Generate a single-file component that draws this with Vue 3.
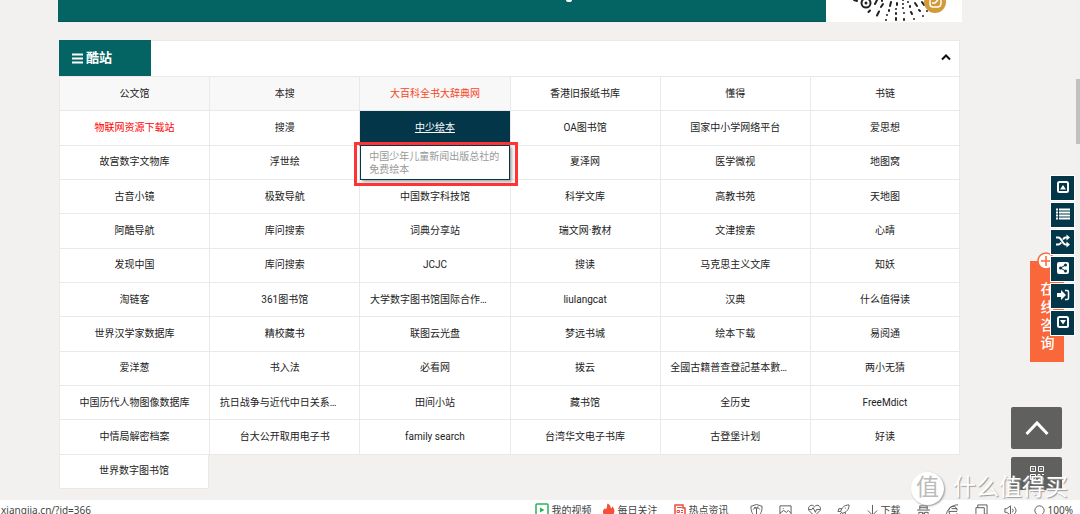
<script setup>
import { ref } from 'vue'

const open = ref(true)

const sites = [
  '公文馆', '本搜', '大百科全书大辞典网', '香港旧报纸书库', '懂得', '书链',
  '物联网资源下载站', '搜漫', '中少绘本', 'OA图书馆', '国家中小学网络平台', '爱思想',
  '故宫数字文物库', '浮世绘', '', '夏泽网', '医学微视', '地图窝',
  '古音小镜', '极致导航', '中国数字科技馆', '科学文库', '高教书苑', '天地图',
  '阿酷导航', '库问搜索', '词典分享站', '瑞文网·教材', '文津搜索', '心晴',
  '发现中国', '库问搜索', 'JCJC', '搜读', '马克思主义文库', '知妖',
  '淘链客', '361图书馆', '大学数字图书馆国际合作…', 'liulangcat', '汉典', '什么值得读',
  '世界汉学家数据库', '精校藏书', '联图云光盘', '梦远书城', '绘本下载', '易阅通',
  '爱洋葱', '书入法', '必看网', '拨云', '全國古籍普查登記基本數…', '两小无猜',
  '中国历代人物图像数据库', '抗日战争与近代中日关系…', '田间小站', '藏书馆', '全历史', 'FreeMdict',
  '中情局解密档案', '台大公开取用电子书', 'family search', '台湾华文电子书库', '古登堡计划', '好读',
  '世界数字图书馆',
]

function cellClass(i) {
  return {
    tinted: i < 3,
    orange: i === 2,
    red: i === 6,
    active: i === 8,
    long: sites[i].endsWith('…'),
  }
}
</script>

<template>
  <div class="page">
    <main class="content">
      <section class="banner">
        <div class="banner-main"><i class="banner-mark"></i></div>
        <div class="banner-code">
          <svg width="136" height="22" viewBox="0 0 136 22" aria-hidden="true">
            <g stroke="#222" stroke-width="2" stroke-linecap="round" fill="none">
              <circle cx="40" cy="3" r="4.500" />
              <path d="M28 0l3 1M42.500 12l1.500-1.500M51 15.500l2-4M55 7l2-3M49 4l2-4M60 20v0M61 15v0M63 11v-1M64 6l1-4M56 1v-1M70 20v-2M70 14v-1M70 9v0M71 5v-2M78 20v-1M78 13v0M77 8v0M77 4v0M77 0v0M88 19v0M86 14l-1-2M84 7v-1M82 2v0M97 16v0M94 11l-1-1M91 6l-2-3M98 5l-2-3M101 11v0" />
            </g>
            <circle cx="40" cy="3" r="1.500" fill="#222" />
            <circle cx="109" cy="2" r="11" fill="#d29a38" />
            <path d="M104 0v4q0 3 3 3h4q4 0 4-4V0M106 3h3l3-3" fill="none" stroke="#fff" stroke-width="1.500" />
          </svg>
        </div>
      </section>

      <section class="panel">
        <header class="panel-head">
          <h2 class="tab">
            <svg width="11" height="11" viewBox="0 0 11 11" aria-hidden="true"><path d="M0 1.500h11M0 5.500h11M0 9.500h11" stroke="#fff" stroke-width="2" /></svg>
            酷站
          </h2>
          <button class="fold" type="button" aria-label="收起" @click="open = !open">
            <svg width="10" height="7" viewBox="0 0 10 7"><path d="M1 5.500l4-4 4 4" fill="none" stroke="#111" stroke-width="2" /></svg>
          </button>
        </header>
        <nav v-if="open" class="grid">
          <div v-for="(name, i) in sites" :key="i" class="cell" :class="cellClass(i)">
            <a v-if="name" href="#">{{ name }}</a>
            <template v-if="i === 8">
              <div class="tip">中国少年儿童新闻出版总社的免费绘本</div>
              <div class="mark"></div>
            </template>
          </div>
        </nav>
      </section>
    </main>

    <button class="consult" type="button">
      <svg class="plus" width="18" height="18" viewBox="0 0 18 18" aria-hidden="true">
        <circle cx="9" cy="9" r="8" fill="#fff" stroke="#fa673a" stroke-width="1.500" />
        <path d="M9 4v10M4 9h10" stroke="#fa673a" stroke-width="1.500" />
      </svg>
      在线咨询
    </button>

    <div class="tools">
      <button type="button" aria-label="顶部">
        <svg viewBox="0 0 14 14"><rect x="2" y="2" width="10" height="10" rx="1.500" fill="none" stroke="#fff" stroke-width="2" /><path d="M4 9.500h6L7 5z" fill="#fff" /></svg>
      </button>
      <button type="button" aria-label="列表">
        <svg viewBox="0 0 14 14"><path d="M0 2.500h2M3 2.500h11M0 5.500h2M3 5.500h11M0 8.500h2M3 8.500h11M0 11.500h2M3 11.500h11" stroke="#fff" stroke-width="2" /></svg>
      </button>
      <button type="button" aria-label="随机">
        <svg viewBox="0 0 14 14"><path d="M0 3.500h2.500c3 0 4 7 7 7H11M0 10.500h2.500c1.200 0 2-.9 2.700-2M7 5.500c.7-1.200 1.500-2 2.700-2H11" fill="none" stroke="#fff" stroke-width="2" /><path d="M10.500 .500v6l3.500-3zM10.500 7.500v6l3.500-3z" fill="#fff" /></svg>
      </button>
      <button type="button" aria-label="分享">
        <svg viewBox="0 0 14 14"><rect x="1" y="1" width="12" height="12" rx="2" fill="#fff" /><path d="M9.500 4L4.500 7l5 3" fill="none" stroke="#033649" /><g fill="#033649"><circle cx="9.500" cy="4" r="1.500" /><circle cx="4.500" cy="7" r="1.500" /><circle cx="9.500" cy="10" r="1.500" /></g></svg>
      </button>
      <button type="button" aria-label="登录">
        <svg viewBox="0 0 14 14"><path d="M1 5h4V2l5 5-5 5V9H1z" fill="#fff" /><path d="M9 2.500h2q1.500 0 1.500 1.500v6q0 1.500-1.500 1.500H9" fill="none" stroke="#fff" stroke-width="1.500" /></svg>
      </button>
      <button type="button" aria-label="底部">
        <svg viewBox="0 0 14 14"><rect x="2" y="2" width="10" height="10" rx="1.500" fill="none" stroke="#fff" stroke-width="2" /><path d="M4 5h6L7 9.500z" fill="#fff" /></svg>
      </button>
    </div>

    <div class="corner">
      <button type="button" aria-label="返回顶部">
        <svg width="24" height="16" viewBox="0 0 24 16"><path d="M1.500 14L12 3l10.500 11" fill="none" stroke="#fff" stroke-width="3" /></svg>
      </button>
      <button type="button" aria-label="二维码">
        <svg width="16" height="16" viewBox="0 0 16 16"><g fill="none" stroke="#fff"><path d="M1.500 1.500h5v5h-5zM9.500 1.500h5v5h-5zM1.500 9.500h5v5h-5zM9 9.500h2v2H9zM13 9.500h2M9 14.500h2v-2h3v3M3 4h2M11 4h2M3 12h2" /></g></svg>
      </button>
    </div>

    <div class="scroll" aria-hidden="true"><i></i></div>

    <div class="watermark"><span class="seal">值</span>什么值得买</div>

    <footer class="status">
      <span class="url">xiangjia.cn/?id=366</span>
      <a href="#" class="feed">
        <svg width="14" height="14" viewBox="0 0 14 14"><rect x="1" y="1" width="12" height="12" rx="1" fill="none" stroke="#25b45a" stroke-width="1.500" /><path d="M5 4.500v5L9.500 7z" fill="#25b45a" /></svg>我的视频
      </a>
      <a href="#" class="feed">
        <svg width="13" height="14" viewBox="0 0 14 14"><path d="M6 0c4 2 3 5 4 5s1-1 1-2c2 2 3 5 2 7-1 3-3 4-6 4s-6-2-6-5c0-2 1-3 2-4 0 1 1 1 1 1 2-1 1-4 2-6z" fill="#f4503c" /></svg>每日关注
      </a>
      <a href="#" class="feed hot">
        <svg width="12" height="14" viewBox="0 0 12 14"><path d="M1 2h8v3h2v7H1z" fill="none" stroke="#ee4a3e" stroke-width="1.500" /><path d="M3 4.500h5M3 7.500h2.500v2H3zM7 7.500h2M7 9.500h2" fill="none" stroke="#ee4a3e" /></svg>热点资讯
      </a>
      <span class="icons">
        <svg viewBox="0 0 14 14"><path d="M1 2.500l6-2 6 2c0 5-1 9-6 11-5-2-6-6-6-11zM3.500 6c1-2 2-2 3.500-1 1.500-1 2.500-1 3.500 1M7 5v6M4.500 4H7l2-1" /></svg>
        <svg viewBox="0 0 14 14"><path d="M1 2h12v10H1zM1 10l4-3 3 2 2-2 3 3M4 5h1" /></svg>
        <svg viewBox="0 0 14 14"><path d="M7 13L1 7C-1 3 4-1 7 3c3-4 8 0 6 4zM1 6h3l1.500-2L8 9l1-3h4" /></svg>
        <svg viewBox="0 0 14 14"><path d="M13 1C8 1 5 4 4 8l2 2c4-1 7-4 7-9zM5 5H2L1 8h3M9 9v3l-3 1v-3M1 13l4-4M9 4v1" /></svg>
        <span class="download"><svg viewBox="0 0 14 14"><path d="M7 1v10M2 7l5 5 5-5" /></svg>下载</span>
        <svg viewBox="0 0 14 14"><path d="M3 6V2h8v4M0 6.500h14M3 4h8M2 9h4v3H2zM8 9h4v3H8zM6 10h2" /></svg>
        <svg viewBox="0 0 14 14"><path d="M12 8H3c1 5 6 6 9 2M3 7c0-6 9-6 9 0M1 12C-1 7 8 0 13 1M6 5h6" /></svg>
        <svg viewBox="0 0 14 14"><path d="M1 4h9v10H1zM3 4V1h10v10h-3" /></svg>
        <svg viewBox="0 0 14 14"><path d="M1 5h2l4-3v10L3 9H1zM9 5q2 2 0 4M11 3q4 4 0 8" /></svg>
        <span class="zoom"><svg viewBox="0 0 14 14"><circle cx="7" cy="7" r="5" /></svg>100%</span>
      </span>
    </footer>
  </div>
</template>

<style>
body { margin: 0; }
</style>

<style scoped>
* { box-sizing: border-box; }
.page {
  position: relative;
  display: flex;
  flex-direction: column;
  height: 100vh;
  overflow: hidden;
  background: #f2f1f0;
  color: #222;
  font: 10px/14px Roboto, "Noto Sans CJK SC", sans-serif;
}
button { padding: 0; border: 0; font: inherit; color: inherit; background: none; cursor: pointer; }
a { color: inherit; text-decoration: none; }
svg { flex: none; }
.content { flex: 1; min-height: 0; padding: 0 120px 0 59px; }
.banner { display: flex; height: 22px; margin: 0 -2px 18px -1px; }
.banner-main { flex: 1; background: #046464; border-bottom: 1px solid #035757; overflow: hidden; }
.banner-mark { display: block; width: 6px; height: 4px; margin: -2px 254px 0 auto; border-radius: 50%; background: #fff; }
.banner-code { width: 136px; background: #fff; }
.banner-code svg { display: block; }
.panel-head {
  display: flex;
  justify-content: space-between;
  align-items: stretch;
  height: 36px;
  background: #fff;
  box-shadow: inset -1px 1px #e9e9e9;
}
.tab {
  display: flex;
  align-items: center;
  gap: 3px;
  width: 92px;
  margin: 0;
  padding-left: 13px;
  background: #046464;
  color: #fff;
  font-size: 13px;
  font-weight: 700;
}
.fold { width: 28px; }
.grid {
  display: grid;
  grid-template-columns: repeat(6, 1fr);
  grid-auto-rows: 1fr;
  min-height: 413px;
  border-top: 1px solid #e9e9e9;
}
.cell {
  position: relative;
  display: flex;
  align-items: center;
  justify-content: center;
  background: #fff;
  border: solid #e9e9e9;
  border-width: 0 0 1px 1px;
  white-space: nowrap;
}
.cell:nth-child(6n), .cell:last-child { border-right-width: 1px; }
.long a { width: 130px; }
.tinted { background: #f8f8f8; }
.orange { color: #f8431c; }
.red { color: #f00; }
.active { background: #033649; color: #fff; z-index: 1; border-bottom-color: #033649; }
.active a { text-decoration: underline; }
.tip {
  position: absolute;
  top: 100%;
  left: 0;
  right: 0;
  padding: 4px 8px 3px;
  background: #fff;
  border: 1px solid #033649;
  box-shadow: 2px 2px 3px #0005;
  color: #999;
  line-height: 13px;
  white-space: normal;
}
.mark { position: absolute; top: 31px; left: -6px; right: -8px; height: 44px; border: 3px solid #f33; }
.consult {
  position: absolute;
  top: 261px;
  right: 16px;
  width: 34px;
  height: 101px;
  padding: 8px 9px 0 10px;
  background: #fa673a;
  color: #fff;
  font-size: 14px;
  line-height: 18px;
  font-weight: 500;
}
.plus { position: absolute; top: -9px; left: 7px; }
.tools { position: absolute; top: 175px; right: 5px; display: grid; gap: 1px; }
.tools button { display: grid; place-items: center; width: 25px; height: 26px; padding-bottom: 3px; background: #033649; border: 1px solid #fff; }
.tools svg { width: 14px; height: 14px; }
.corner { position: absolute; top: 407px; right: 18px; height: 83px; overflow: hidden; display: grid; gap: 8px; align-content: start; }
.corner button { display: grid; place-items: center; width: 51px; height: 42px; background: #60605f; border-radius: 2px; }
.corner button + button { align-items: start; padding-top: 8px; }
.scroll { position: absolute; top: 0; right: 0; bottom: 14px; width: 4px; background: #f0f0f0; }
.scroll i { display: block; height: 65px; margin-top: 79px; background: #c1c1c1; }
.watermark {
  position: absolute;
  right: 12px;
  bottom: 9px;
  display: flex;
  align-items: center;
  gap: 9px;
  color: #fff;
  font-size: 23px;
  line-height: 34px;
  text-shadow: 1px 1px 1px #999;
}
.seal { width: 33px; height: 33px; border-radius: 50%; background: #fff; box-shadow: 1px 1px 2px #999; color: #bbb; text-align: center; line-height: 31px; text-shadow: none; }
.status {
  display: flex;
  flex: 0 0 14px;
  align-items: flex-start;
  overflow: hidden;
  padding-right: 7px;
  background: #fff;
  color: #444;
  font-family: "Noto Sans", "Noto Sans CJK SC", sans-serif;
  line-height: 20px;
  white-space: nowrap;
}
.url { display: flex; justify-content: flex-end; width: 91px; margin-right: auto; font-size: 10px; }
.feed { display: flex; align-items: center; gap: 3px; height: 20px; margin-right: 10px; }
.hot { margin: 0 21px 0 6px; }
.icons { display: flex; align-items: center; gap: 16px; height: 20px; }
.icons svg { width: 13px; height: 13px; fill: none; stroke: #555; }
.download, .zoom { display: flex; align-items: center; gap: 2px; }
</style>
